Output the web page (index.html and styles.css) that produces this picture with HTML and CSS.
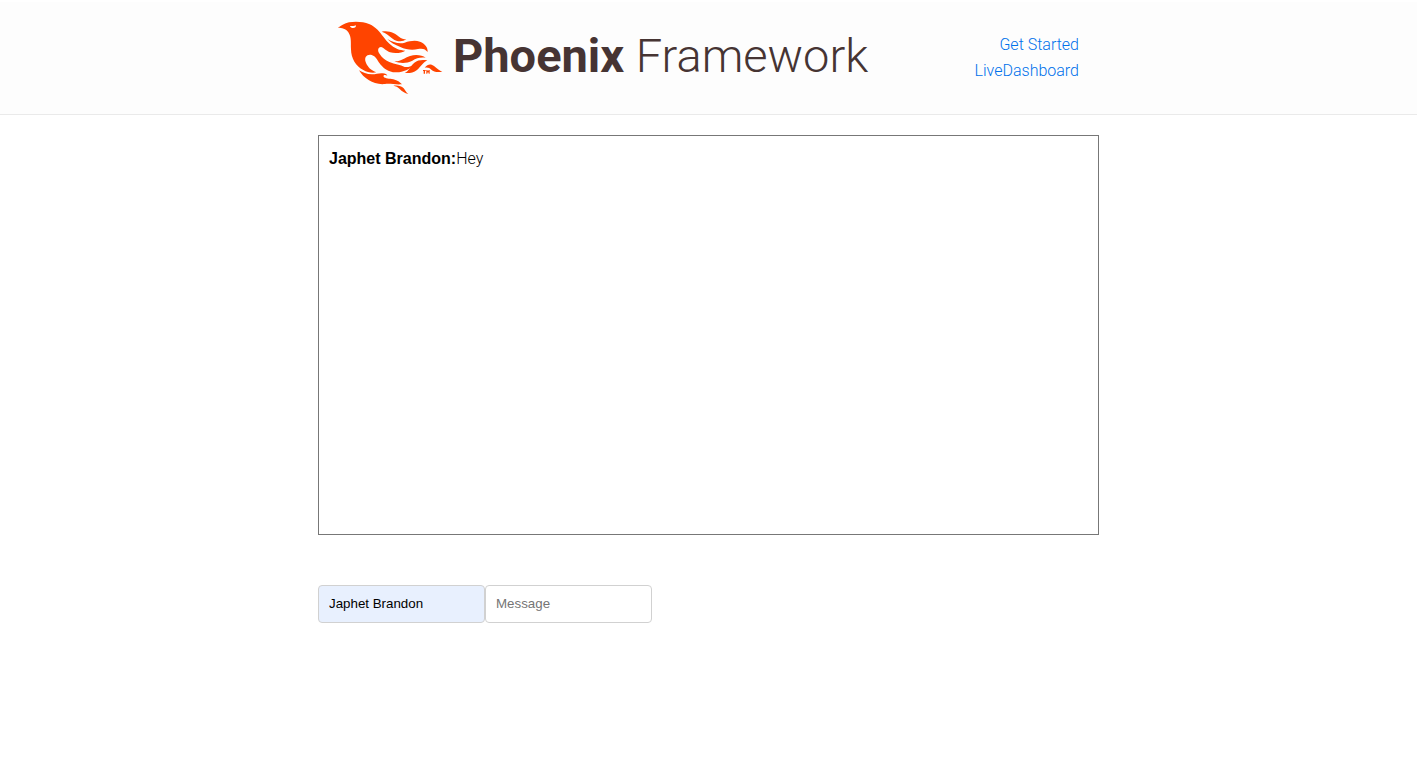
FILE: index.html
```html
<!DOCTYPE html>
<html lang="en">
<head>
<meta charset="utf-8">
<meta name="viewport" content="width=device-width, initial-scale=1">
<title>Phoenix Framework</title>
<link rel="stylesheet" href="styles.css">
</head>
<body>
<header class="site-header">
  <div class="container header-row">
    <a class="logo" href="#" aria-label="Phoenix Framework">
      <svg class="logo-bird" viewBox="21 33 318 222" aria-hidden="true">
        <path fill-rule="evenodd" d="M24 53C35 47 43 40 57 37C76 34 101 35 117 42C137 50 149 66 160 80C171 96 184 108 202 117C209 120 218 121 226 122C216 129 195 131 180 127C170 124 160 112 153 111C143 111 142 123 149 132C157 144 165 150 178 156C195 164 211 164 224 171C234 172 242 170 250 166C239 178 218 188 197 187C174 186 162 175 152 164C143 154 139 139 125 135C111 132 102 141 107 156C113 172 123 181 139 187C127 190 111 187 100 180C78 170 63 145 63 118C62 96 65 83 55 67C48 55 35 54 24 53ZM60 48C62 55 72 56 77 51L78 46C71 50 66 47 60 48Z"/>
        <path d="M155 65C178 60 196 71 207 80C214 86 221 88 229 88C218 96 201 96 188 86C177 78 169 69 155 65Z"/>
        <path d="M172 87C188 96 207 103 224 98C240 93 255 90 270 95C285 101 294 112 293 126C286 117 278 114 264 117C247 121 228 119 211 111C195 105 180 97 172 87Z"/>
        <path d="M193 154C214 155 223 143 240 138C257 132 276 135 287 143C270 141 259 145 247 152C229 161 210 160 193 154Z"/>
        <path d="M224 189C237 184 239 169 253 158C264 149 278 149 292 151C278 158 273 170 261 180C250 189 237 190 224 189Z"/>
        <path d="M284 173C294 162 302 161 313 169C322 176 328 183 337 185C323 188 311 186 304 179C298 173 293 171 284 173Z"/>
        <path d="M87 181C98 187 110 193 126 193C138 193 146 189 158 190C166 191 171 193 172 197C166 193 158 195 161 200C165 206 179 205 190 208C203 211 209 216 216 223C197 225 182 220 165 222C146 224 129 218 117 211C103 203 94 192 87 181Z"/>
        <path d="M190 227C202 225 214 227 221 235C226 240 228 248 235 252C224 250 216 244 209 237C203 231 198 228 190 227Z"/>
        <path d="M279 180H287V183H285V191H281V183H279ZM289 180H292L294 184L296 180H299V191H296V186L294 189L292 186V191H289Z"/>
      </svg>
      <span class="logo-text"><strong>Phoenix</strong> Framework</span>
    </a>
    <nav>
      <ul class="nav-list">
        <li><a href="#">Get Started</a></li>
        <li><a href="#">LiveDashboard</a></li>
      </ul>
    </nav>
  </div>
</header>
<main class="container">
  <section class="chat-box" aria-label="Messages">
    <p class="message"><b>Japhet Brandon:</b>Hey</p>
  </section>
  <form class="chat-form">
    <input class="field field-filled" type="text" aria-label="Name" value="Japhet Brandon">
    <input class="field" type="text" aria-label="Message" placeholder="Message">
  </form>
</main>
</body>
</html>
```
FILE: styles.css
```css
* {
  box-sizing: border-box;
}

body {
  margin: 0;
  padding-top: 2px;
  background: #fff;
  color: #000;
  font-family: Roboto, "Liberation Sans", sans-serif;
  font-size: 16px;
  font-weight: 300;
  line-height: 26px;
}

.container {
  width: 100%;
  max-width: 781px;
  margin: 0 auto;
}

.site-header {
  margin-bottom: 20px;
  border-bottom: 1px solid #eaeaea;
  background: #fdfdfd;
}

.header-row {
  display: flex;
  align-items: center;
  justify-content: space-between;
  padding: 19px 20px;
}

.logo {
  display: flex;
  align-items: flex-start;
  gap: 10px;
  margin-left: -1px;
  color: #463433;
  text-decoration: none;
}

.logo-bird {
  width: 106px;
  height: 74px;
  fill: #ff4400;
}

.logo-text {
  font-size: 47px;
  line-height: 70px;
  white-space: nowrap;
}

.logo-text strong {
  font-weight: 700;
}

.nav-list {
  margin: 0;
  padding: 0;
  list-style: none;
  text-align: right;
}

.nav-list a {
  color: #0071eb;
  text-decoration: none;
}

.chat-box {
  height: 400px;
  padding: 10px;
  overflow: auto;
  border: 1px solid #777;
}

.message {
  margin: 0;
}

.message b {
  font-family: "Liberation Sans", sans-serif;
  font-weight: 700;
}

.chat-form {
  display: flex;
  margin-top: 50px;
}

.field {
  width: 167px;
  height: 38px;
  padding: 6px 10px 8px;
  border: 1px solid #d1d1d1;
  border-radius: 4px;
  background: #fff;
  color: #000;
  font-family: "Liberation Sans", sans-serif;
}

.field::placeholder {
  color: #757575;
}

.field-filled {
  background: #e8f0fe;
}
```
